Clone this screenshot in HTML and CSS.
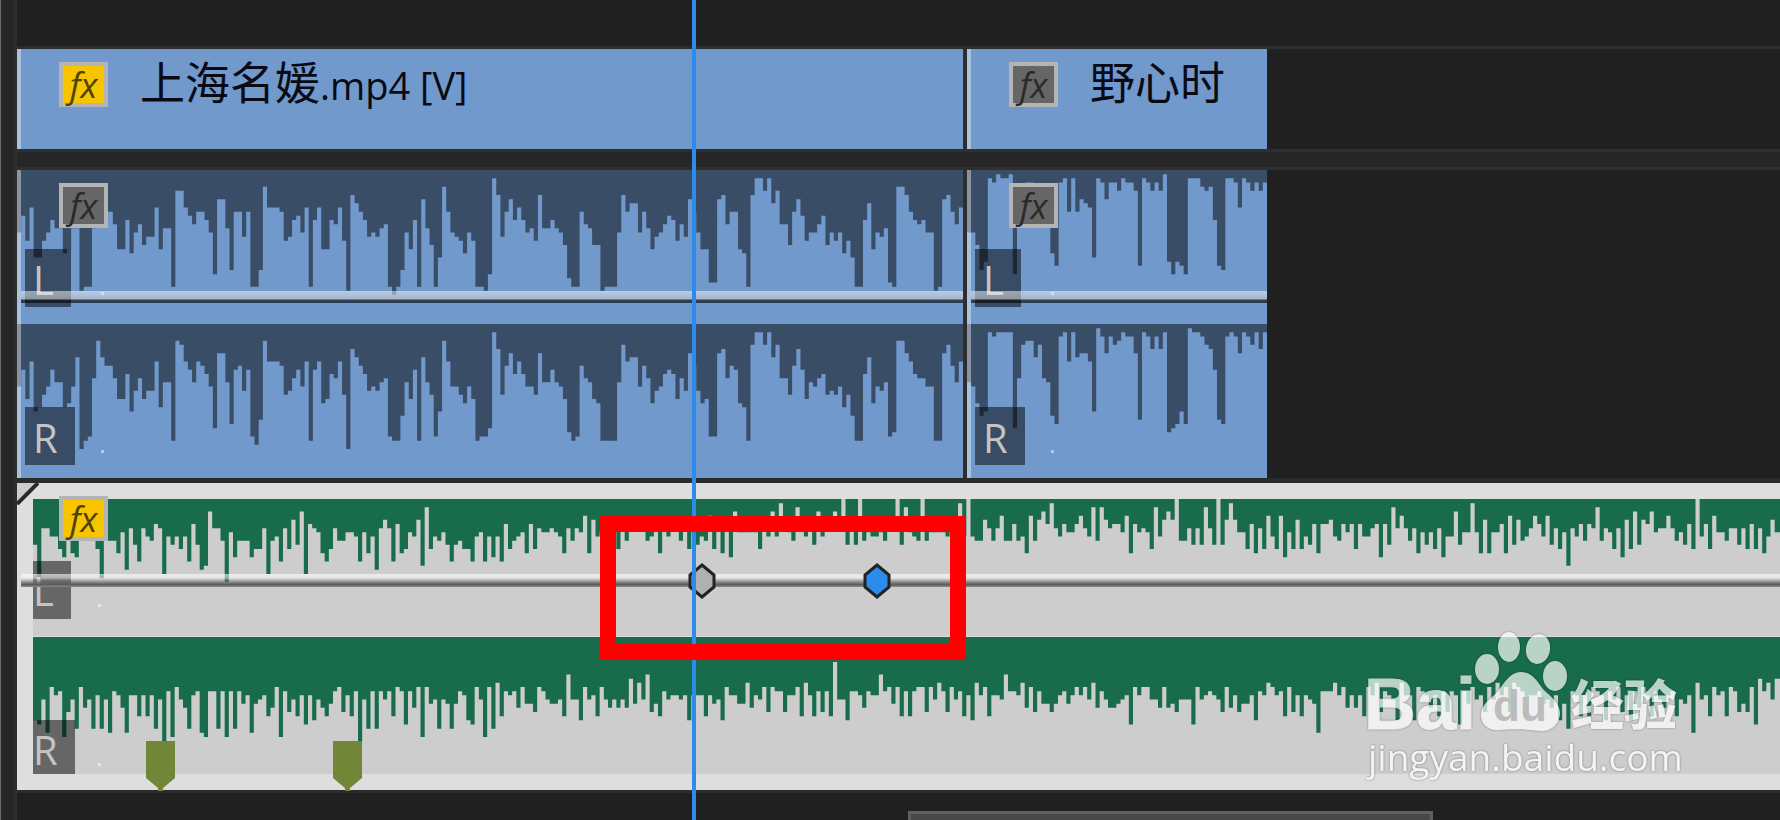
FILE: index.html
```html
<!DOCTYPE html>
<html lang="zh-CN">
<head>
    <meta charset="UTF-8">
    <meta name="viewport" content="width=device-width, initial-scale=1.0">
    <title>时间轴</title>
    <link rel="stylesheet" href="styles.css">
</head>
<body>

    <div class="timeline">
        <div class="gutter"></div>

        <div class="tracks">
            <div class="track-empty"></div>

            <!-- 视频轨道 -->
            <div class="track video">
                <div class="clip clip-a">
                    <button class="fx fx-on">fx</button>
                    <span class="name">上海名媛<small>.mp4 [V]</small></span>
                </div>
                <div class="clip clip-b">
                    <button class="fx">fx</button>
                    <span class="name">野心时</span>
                </div>
            </div>

            <div class="divider"></div>

            <!-- 原声音频轨道 -->
            <div class="track audio">
                <div class="clip clip-a">
                    <div class="lane">
                        <svg class="wave" data-wave="a-left"></svg>
                        <span class="channel channel-l">L</span>
                    </div>
                    <div class="lane">
                        <svg class="wave" data-wave="a-right"></svg>
                        <span class="channel">R</span>
                    </div>
                    <div class="level"></div>
                    <button class="fx">fx</button>
                </div>
                <div class="clip clip-b">
                    <div class="lane">
                        <svg class="wave" data-wave="b-left"></svg>
                        <span class="channel channel-l">L</span>
                    </div>
                    <div class="lane">
                        <svg class="wave" data-wave="b-right"></svg>
                        <span class="channel">R</span>
                    </div>
                    <div class="level"></div>
                    <button class="fx">fx</button>
                </div>
            </div>

            <!-- 配乐轨道 -->
            <div class="track music">
                <div class="clip clip-music">
                    <svg class="corner" viewBox="0 0 22 22">
                        <path d="M0 0H22L0 22Z" fill="#cdcdcd"/>
                        <path d="M21 0L0 21" stroke="#2a2a2a" stroke-width="4"/>
                    </svg>
                    <div class="lane">
                        <svg class="wave" data-wave="music-left"></svg>
                        <span class="channel channel-l">L</span>
                    </div>
                    <div class="lane">
                        <svg class="wave" data-wave="music-right"></svg>
                        <span class="channel">R</span>
                    </div>
                    <div class="level"></div>
                    <button class="fx fx-on">fx</button>
                    <svg class="marker marker-1" viewBox="0 0 29 50"><path d="M0 0H29V37L17 47V50H12V47L0 37Z" fill="#718637"/></svg>
                    <svg class="marker marker-2" viewBox="0 0 29 50"><path d="M0 0H29V37L17 47V50H12V47L0 37Z" fill="#718637"/></svg>
                    <svg class="keyframe keyframe-1" viewBox="0 0 30 38"><path d="M15 3L27 13V25L15 35L3 25V13Z" fill="#b0b0b0"/></svg>
                    <svg class="keyframe keyframe-2" viewBox="0 0 30 38"><path d="M15 3L27 13V25L15 35L3 25V13Z" fill="#2d8ceb"/></svg>
                </div>
            </div>

            <div class="footer">
                <div class="scrollbar"></div>
            </div>
        </div>

        <div class="playhead"></div>
        <div class="highlight"></div>

        <svg class="watermark" viewBox="0 0 340 170">
            <g class="wm-logo">
                <text x="14" y="109" class="wm-bai">Bai</text>
                <ellipse cx="137" cy="49" rx="12" ry="15"/>
                <ellipse cx="159" cy="27" rx="11" ry="15"/>
                <ellipse cx="188" cy="29" rx="12" ry="15" transform="rotate(10 188 29)"/>
                <ellipse cx="205" cy="56" rx="12" ry="15"/>
                <path d="M171 52C160 52 155 62 148 71C140 80 131 84 131 95C131 106 140 111 150 110C160 109 180 109 190 111C201 112 210 104 210 93C210 83 200 76 193 69C187 61 182 52 171 52Z"/>
                <text x="221" y="105" class="wm-cn">经验</text>
            </g>
            <text x="143" y="101" class="wm-du">du</text>
            <text x="18" y="151" class="wm-url">jingyan.baidu.com</text>
        </svg>
    </div>

    <script src="waves.js"></script>
</body>
</html>
```
FILE: styles.css
```css
body {
    margin: 0;
    background-color: #202020;
    font-family: "Open Sans", "Noto Sans CJK SC", sans-serif;
}
.timeline {
    position: relative;
    display: grid;
    grid-template-columns: 17px 1fr;
    min-height: 100vh;
    overflow: hidden;
}
.gutter {
    background-color: #262626;
    border-left: 1px solid #6a6a6a;
    border-right: 3px solid #2e2e2e;
}
.tracks {
    display: flex;
    flex-direction: column;
    min-width: 0;
}
.track-empty {
    height: 46px;
    border-bottom: 3px solid #2d2d2d;
}
.track {
    display: flex;
    gap: 4px;
}
.divider {
    height: 15px;
    background-color: #262626;
    border-top: 3px solid #2f2f2f;
    border-bottom: 3px solid #2f2f2f;
}
.clip {
    position: relative;
    box-sizing: border-box;
    background-color: #7199cc;
}
.clip-a {
    width: 946px;
}
.clip-b {
    width: 300px;
}
/* 片段左侧的亮边 */
.video .clip::before,
.audio .clip::before {
    content: "";
    position: absolute;
    left: 0;
    top: 0;
    bottom: 0;
    width: 4px;
    background-color: rgba(255, 255, 255, 0.4);
    z-index: 1;
}
/* 两个片段之间的接缝 */
.video .clip-b,
.audio .clip-b {
    box-shadow: -4px 0 0 #2e2e2e;
}
.video .clip {
    display: flex;
    height: 100px;
    padding-left: 123px;
}
.name {
    font-size: 45px;
    line-height: 68px;
    color: #0a0a14;
    white-space: nowrap;
}
.name small {
    font-size: 38px;
}
.fx {
    position: absolute;
    left: 42px;
    top: 13px;
    width: 49px;
    height: 45px;
    padding: 0;
    border: 4px solid #b4b4b4;
    background-color: #666;
    color: #2a2a2a;
    font-family: "Open Sans", sans-serif;
    font-size: 35px;
    font-style: italic;
    font-weight: 500;
    line-height: 34px;
    z-index: 2;
}
.fx-on {
    background-color: #f6c500;
    color: #4f4200;
}
.audio {
    border-bottom: 5px solid #2b2b2b;
}
.lane {
    position: relative;
    height: 154px;
    overflow: hidden;
}
.wave {
    display: block;
    height: 150px;
    width: 100%;
    fill: #3a4d66;
}
.channel {
    position: absolute;
    left: 8px;
    top: 83px;
    width: 50px;
    height: 58px;
    box-sizing: border-box;
    padding: 2px 0 0 8px;
    background-color: rgba(0, 0, 0, 0.5);
    color: #c4c4c4;
    font-size: 40px;
    line-height: 58px;
}
.channel::after {
    content: "";
    position: absolute;
    left: 76px;
    top: 43px;
    width: 3px;
    height: 3px;
    background-color: #a8d0ee;
}
.channel-l {
    top: 79px;
    width: 46px;
}
.level {
    position: absolute;
    left: 4px;
    right: 0;
    top: 121px;
    height: 12px;
    background: linear-gradient(rgba(255, 255, 255, 0.5) 0, rgba(200, 200, 200, 0.6) 67%, rgba(0, 0, 0, 0.6) 75%, rgba(0, 0, 0, 0.6) 100%);
}
.clip-music {
    flex: 1;
    min-width: 0;
    padding: 16px 0 16px 16px;
    background-color: #dedede;
}
.clip-music .lane {
    height: 137px;
    background-color: #cdcdcd;
}
.clip-music .lane + .lane {
    margin-top: 1px;
}
.clip-music .wave {
    width: 1750px;
    fill: #186c4c;
}
.clip-music .channel {
    left: 0;
    width: 42px;
    height: 54px;
    padding-left: 0;
    line-height: 56px;
}
.clip-music .channel-l {
    top: 62px;
    width: 38px;
    height: 58px;
}
.clip-music .channel::after {
    left: 65px;
    background-color: #dbe8f0;
}
.clip-music .level {
    top: 91px;
    height: 13px;
    background: linear-gradient(rgba(255, 255, 255, 0.6) 0, rgba(255, 255, 255, 0.5) 30%, rgba(120, 120, 120, 0.4) 50%, #5c5c5c 80%, #8a8a8a 100%);
}
.corner {
    position: absolute;
    left: 0;
    top: 0;
    width: 22px;
    height: 22px;
}
.marker {
    position: absolute;
    bottom: -1px;
    width: 29px;
    height: 50px;
}
.marker-1 {
    left: 129px;
}
.marker-2 {
    left: 316px;
}
.keyframe {
    position: absolute;
    top: 79px;
    width: 30px;
    height: 38px;
    stroke: #222;
    stroke-width: 3px;
}
.keyframe-1 {
    left: 670px;
}
.keyframe-2 {
    left: 845px;
}
.footer {
    flex: 1;
    min-height: 27px;
    border-top: 3px solid #2b2b2b;
}
.scrollbar {
    width: 519px;
    height: 20px;
    margin: 18px 0 -14px 891px;
    border: 3px solid #606060;
    background-color: #484848;
}
.playhead {
    position: absolute;
    left: 692px;
    top: 0;
    bottom: 0;
    width: 4px;
    background-color: #2d8ceb;
    z-index: 3;
}
.highlight {
    position: absolute;
    left: 600px;
    top: 516px;
    width: 334px;
    height: 112px;
    border: 16px solid #f00;
    z-index: 4;
}
.watermark {
    position: absolute;
    left: 1350px;
    top: 620px;
    width: 340px;
    height: 170px;
    z-index: 5;
}
.wm-logo {
    fill: #fff;
    opacity: 0.7;
    filter: drop-shadow(0 0 1px rgba(0, 0, 0, 0.5));
}
.wm-bai {
    font: bold 72px "Liberation Sans", sans-serif;
    stroke: #fff;
    stroke-width: 1px;
}
.wm-du {
    font: bold 44px "Liberation Sans", sans-serif;
    fill: #bcbcbc;
}
.wm-cn {
    font: 900 53px "Noto Sans CJK SC", sans-serif;
}
.wm-url {
    font-size: 37px;
    fill: #f4f4f4;
    filter: drop-shadow(0 0 1px rgba(0, 0, 0, 0.4));
}
```
FILE: waves.js
```js
// 每一列波形从顶部向下的深度
var waves = {
    "a-left": "15 11 17 9 21 21 17 15 12 14 14 20 19 14 14 29 28 28 14 10 10 10 10 13 19 19 12 20 15 13 18 16 16 9 19 14 14 28 5 5 9 11 13 10 10 12 15 25 7 7 14 24 10 10 16 10 28 28 24 4 9 9 9 10 17 16 12 11 15 9 28 12 9 19 19 12 13 9 17 29 6 8 10 12 16 15 16 14 13 28 30 28 24 15 19 12 28 7 14 18 28 21 4 10 15 16 17 20 15 17 28 28 29 25 2 6 16 10 7 12 9 12 15 14 17 6 14 14 12 14 15 18 26 28 28 10 13 14 18 18 29 28 28 28 15 6 10 8 8 15 10 14 19 16 15 13 11 12 17 13 16 7 10 15 19 19 27 27 7 6 13 10 10 19 20 28 6 2 2 5 2 8 5 13 13 18 10 7 11 17 15 15 13 11 18 15 17 15 20 17 21 28 28 12 8 19 15 16 14 27 28 4 4 6 10 12 13 12 15 15 29 28 7 6 10 13 9",
    "a-right": "15 11 18 9 21 20 17 15 11 14 14 20 19 15 8 30 28 27 13 4 8 10 10 13 18 18 12 21 16 13 18 16 16 9 20 14 14 28 4 5 9 11 14 9 10 12 15 25 7 7 14 24 11 10 16 11 27 29 23 4 9 9 9 10 17 16 13 11 15 9 28 11 9 19 18 12 13 9 17 30 6 8 10 12 16 15 16 14 13 27 28 28 22 14 18 11 28 8 14 17 27 21 4 9 15 15 17 19 15 18 28 27 27 25 2 6 17 10 7 12 9 12 15 15 17 7 14 14 11 14 15 18 26 28 27 10 13 14 18 19 28 28 28 28 14 5 9 8 8 15 10 13 19 16 15 12 11 12 18 13 16 7 10 16 19 18 27 27 7 6 13 10 11 19 20 28 5 2 2 5 2 8 5 13 13 17 10 6 11 18 14 15 13 12 17 16 17 15 20 17 22 28 28 12 8 19 15 16 14 27 26 4 4 7 9 12 13 13 15 15 28 28 7 5 10 14 9",
    "b-left": "15 15 18 24 22 2 3 1 2 2 1 25 11 4 3 3 7 4 12 13 20 23 3 2 10 2 10 7 8 9 21 2 3 7 3 3 5 2 3 3 5 23 2 3 5 3 5 1 22 25 22 23 25 2 2 2 4 5 4 12 23 24 2 2 3 9 2 3 5 3 5 3",
    "b-right": "14 15 19 22 21 2 3 2 2 2 2 25 13 5 4 4 8 5 13 14 22 24 3 2 9 2 8 7 7 9 21 1 3 7 3 5 4 2 3 3 7 23 2 3 6 3 6 2 26 25 24 21 24 1 2 2 3 5 6 11 23 24 3 2 3 7 2 3 5 2 6 2",
    "music-left": "11 19 7 7 9 9 12 14 9 13 14 9 9 9 9 12 19 9 10 10 13 8 17 7 11 15 7 9 10 6 7 18 9 11 9 12 9 15 6 11 17 16 3 7 7 10 20 8 14 10 10 10 14 12 12 7 18 10 9 15 7 12 5 11 3 18 6 7 8 13 15 12 7 10 10 8 8 9 15 8 13 9 17 7 5 7 15 6 13 12 8 9 5 16 2 12 9 10 8 11 15 11 10 12 12 15 9 8 15 9 14 9 15 6 12 10 9 8 13 6 12 7 8 8 7 8 9 13 7 10 7 8 4 13 5 9 8 8 8 8 12 7 10 7 7 7 7 10 9 7 13 7 9 7 7 10 7 12 8 11 9 10 4 12 7 13 7 14 3 8 8 8 8 8 12 7 9 3 9 1 7 8 10 2 7 9 7 11 3 9 7 7 3 7 0 11 7 11 0 10 8 9 9 8 10 7 7 0 11 2 8 9 10 0 10 8 8 8 8 9 7 7 1 9 0 9 10 10 5 7 10 7 4 10 10 6 10 9 13 4 10 5 3 6 1 7 9 6 8 8 6 4 7 9 2 10 2 5 7 6 6 8 4 13 6 8 7 8 12 2 9 5 3 5 0 10 10 7 11 7 11 2 7 11 0 11 5 1 5 8 8 12 6 13 7 12 4 9 12 4 14 8 12 5 12 9 11 6 13 6 6 5 9 10 6 8 6 12 6 9 9 7 6 14 6 11 2 7 4 7 10 7 13 8 11 8 12 7 14 9 9 3 11 8 8 1 8 13 5 13 8 8 6 13 4 11 5 10 9 7 4 6 9 4 11 7 12 8 16 7 9 6 10 6 7 2 10 7 8 12 7 14 5 12 3 11 5 6 3 8 7 7 4 7 10 8 11 6 12 0 9 6 12 4 8 8 10 7 7 11 7 12 6 12 7 13 9 5 8 8",
    "music-right": "20 21 15 23 12 14 13 24 18 15 22 12 17 15 22 14 22 15 23 13 14 17 23 14 14 19 14 19 14 22 15 25 13 24 12 15 17 22 14 13 23 24 13 13 22 13 24 13 22 13 16 14 23 16 15 14 19 17 12 24 13 18 15 19 14 21 14 20 15 17 19 16 13 12 18 14 19 13 25 15 22 13 22 13 15 13 19 12 13 21 13 17 12 24 12 16 15 22 15 16 22 16 13 14 20 21 12 15 24 12 22 11 19 13 14 13 17 12 16 16 18 12 13 15 16 16 15 19 9 15 15 20 12 15 14 19 12 15 17 15 17 15 17 10 16 11 15 9 18 16 19 13 15 14 14 15 14 20 14 14 14 19 14 16 15 20 12 14 14 16 16 11 17 14 15 12 18 12 13 13 18 14 14 12 19 11 14 19 13 18 13 19 6 15 15 20 13 13 14 17 13 14 14 9 13 12 16 12 19 13 19 13 12 12 18 12 15 11 13 18 12 15 13 19 14 20 11 14 12 19 14 14 15 9 13 13 14 11 17 12 18 13 16 16 18 16 14 13 16 14 12 14 12 15 11 17 13 15 17 17 16 15 14 21 12 14 12 12 15 15 17 12 17 16 18 15 15 15 21 12 15 14 13 14 15 18 12 17 14 18 16 16 14 20 13 14 11 12 14 13 19 12 18 14 19 14 15 16 23 13 13 13 11 14 12 17 14 17 14 19 12 14 11 18 13 14 15 20 11 14 14 20 12 13 14 17 14 19 13 18 13 14 21 13 16 12 15 14 18 12 15 11 14 12 18 11 12 13 17 14 14 13 16 15 17 14 20 16 22 13 14 19 14 19 12 13 14 20 13 15 12 18 14 20 13 17 12 14 19 13 15 17 14 13 19 15 16 14 23 11 15 14 19 12 14 13 19 12 13 18 16 18 12 21 10 13 11 15 10 10"
};

function drawWave(svg) {
    var depths = waves[svg.dataset.wave].split(" ");
    var columns = svg.closest(".clip-music") ? 420 : depths.length;
    var d = "M0 0";
    for (var i = 0; i < columns; i++) {
        d += "V" + (depths[i] || 12) + "H" + (i + 1);
    }
    var path = document.createElementNS("http://www.w3.org/2000/svg", "path");
    path.setAttribute("d", d + "V0Z");
    svg.setAttribute("viewBox", "0 0 " + columns + " 36");
    svg.setAttribute("preserveAspectRatio", "none");
    svg.appendChild(path);
}

document.querySelectorAll(".wave").forEach(drawWave);
```
